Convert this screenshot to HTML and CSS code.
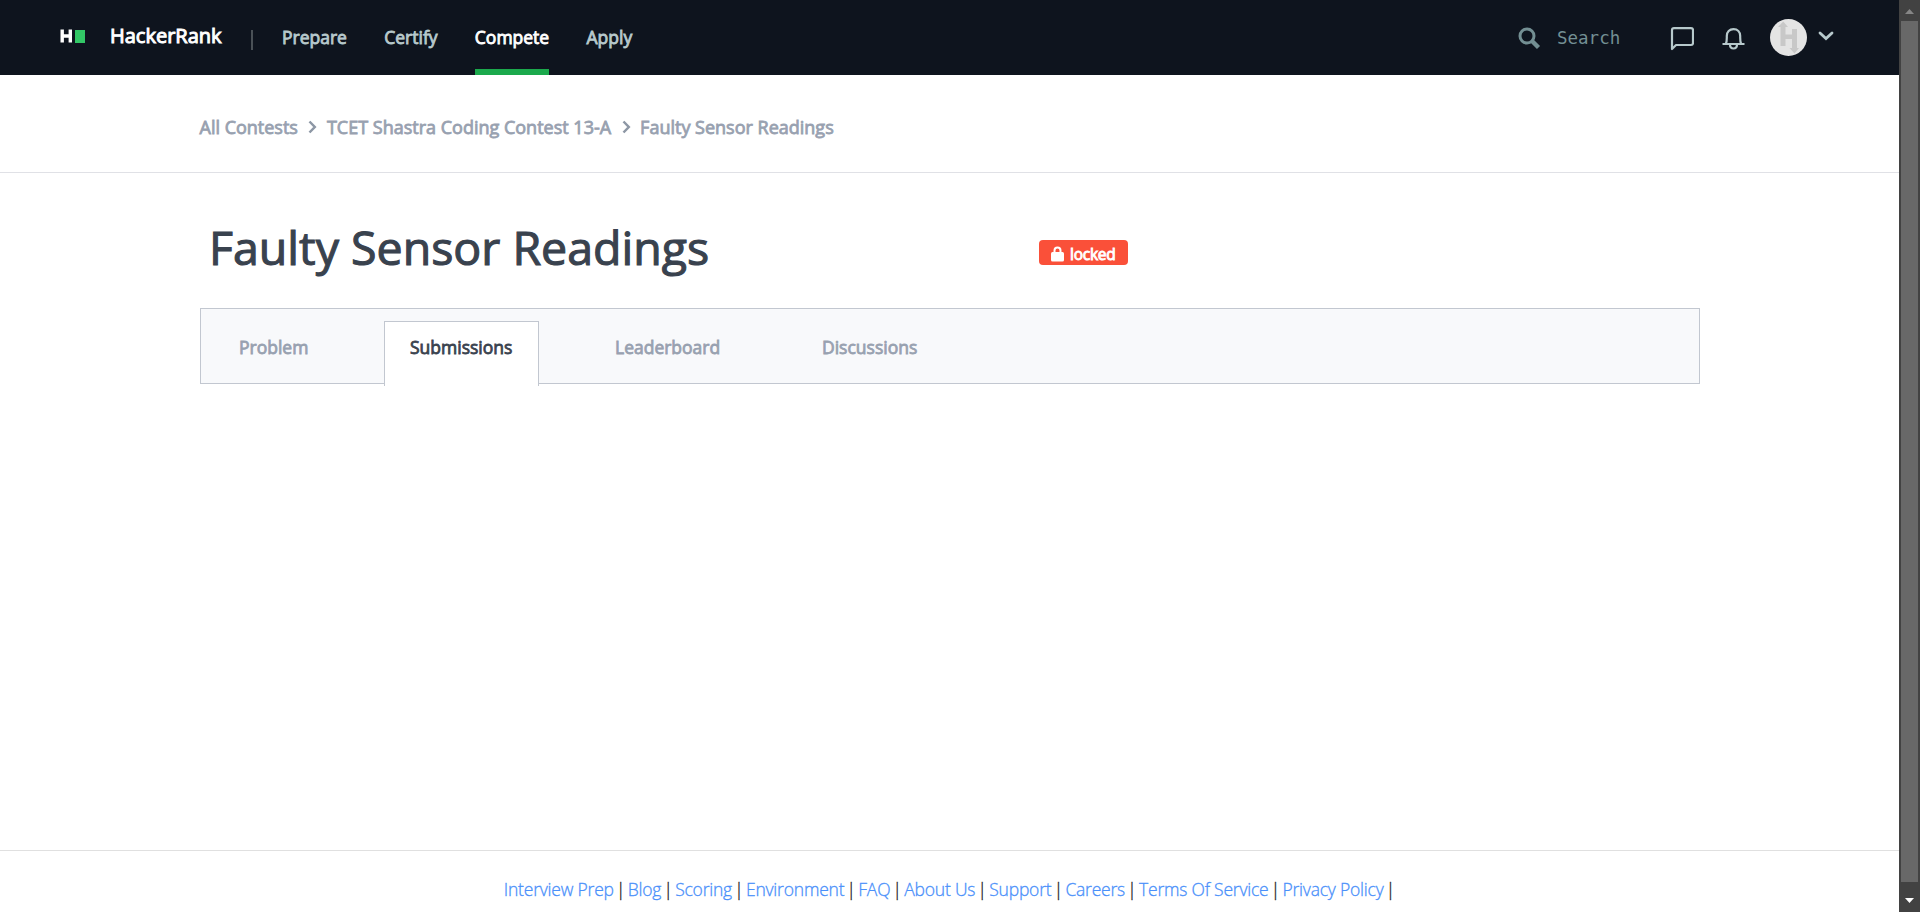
FILE: index.html
```html
<!DOCTYPE html>
<html lang="en">
<head>
<meta charset="utf-8">
<title>Faulty Sensor Readings | HackerRank</title>
<link rel="stylesheet" href="styles.css">
</head>
<body>
<div class="page">
  <header class="navbar">
    <svg class="logo" width="27" height="16" viewBox="0 0 27 16"><path d="M2.2 1.500v13M10.300 1.500v13M2 8h8" stroke="#fff" stroke-width="3.400" fill="none"/><path d="M15 2h10v13h-10z" fill="#32c766"/></svg>
    <span class="brand">HackerRank</span>
    <span class="divider"></span>
    <nav class="links">
      <a>Prepare</a><a>Certify</a><a class="active">Compete</a><a>Apply</a>
    </nav>
    <div class="tools">
      <svg class="search-icon" width="23" height="23" viewBox="0 0 23 23" fill="none" stroke="#738f93"><circle cx="9" cy="9" r="7" stroke-width="3"/><path d="M14 14l6.500 6.500" stroke-width="4.400"/></svg>
      <span class="search">Search</span>
      <svg class="chat" width="24" height="24" viewBox="0 0 24 24" fill="none" stroke="#b7c9cc" stroke-width="2.200" stroke-linejoin="round"><path d="M2 22V3Q2 1.200 4 1.200H21Q23 1.200 23 3V16Q23 18 21 18H6Z"/></svg>
      <svg class="bell" width="23" height="22" viewBox="0 0 23 22" fill="none" stroke="#b7c9cc" stroke-width="2.200"><path d="M.5 16H22.5M3.8 16C5 14 4.800 12 4.800 8C4.800 3.800 7.500 1.200 11.500 1.200S18.200 3.800 18.200 8C18.200 12 18 14 19.200 16M8 16.500C8 19 9.500 20.500 11.500 20.500S15 19 15 16.500"/></svg>
      <svg class="avatar" width="37" height="37" viewBox="0 0 37 37"><circle cx="18.500" cy="18.500" r="18.500" fill="#e4e4e4"/><path d="M10.500 27V8H8L13.200 2.500L18 8H15.500V15.500H22V10H27V29H29L24.500 34.500L19.500 29H22V20H15.500V27Z" fill="#c8c8c8"/></svg>
      <svg class="caret" width="16" height="10" viewBox="0 0 16 10" fill="none" stroke="#b7c9cc" stroke-width="2.800" stroke-linecap="round"><path d="M2 2l6 5.500L14 2"/></svg>
    </div>
  </header>
  <div class="crumbs">
    <a>All Contests</a>
    <svg width="9" height="14" viewBox="0 0 9 14"><path d="M1.500 1.500L6.800 7L1.500 12.500" fill="none" stroke="#8d97a5" stroke-width="2.500"/></svg>
    <a>TCET Shastra Coding Contest 13-A</a>
    <svg width="9" height="14" viewBox="0 0 9 14"><path d="M1.500 1.500L6.800 7L1.500 12.500" fill="none" stroke="#8d97a5" stroke-width="2.500"/></svg>
    <a>Faulty Sensor Readings</a>
  </div>
  <main>
    <div class="heading">
      <h1>Faulty Sensor Readings</h1>
      <span class="badge"><svg width="13" height="16" viewBox="0 0 13 16"><path d="M3.500 7V4.500a3 3 0 0 1 6 0V7" fill="none" stroke="#fff" stroke-width="2"/><rect y="6" width="13" height="9.500" rx="1.500" fill="#fff"/></svg><span>locked</span></span>
    </div>
    <div class="tabs">
      <a class="problem">Problem</a><a class="current">Submissions</a><a class="leader">Leaderboard</a><a class="discuss">Discussions</a>
    </div>
  </main>
  <footer>
    <p><a>Interview Prep</a> | <a>Blog</a> | <a>Scoring</a> | <a>Environment</a> | <a>FAQ</a> | <a>About Us</a> | <a>Support</a> | <a>Careers</a> | <a>Terms Of Service</a> | <a>Privacy Policy</a> |</p>
  </footer>
</div>
<div class="scrollbar">
  <svg width="21" height="21" viewBox="0 0 21 21"><path d="M6 14L10.500 9L15 14Z" fill="#868686"/></svg>
  <div class="thumb"></div>
  <svg width="21" height="30" viewBox="0 0 21 30"><path d="M6 16L10.500 21L15 16Z" fill="#fff"/></svg>
</div>
</body>
</html>
```
FILE: styles.css
```css
body { margin: 0; display: flex; height: 912px; overflow: hidden; background: #fff; font-family: "Open Sans", sans-serif; font-size: 17.5px; white-space: nowrap; }
.page { width: 1899px; display: flex; flex-direction: column; }
svg { display: block; flex: none; }
.navbar { height: 75px; background: #0e141e; display: flex; line-height: 75px; flex: none; }
.logo { margin: 28px 0 0 60px; }
.brand { width: 112px; margin-left: 23px; font-size: 20px; line-height: 71px; color: #fff; -webkit-text-stroke: 1px #fff; }
.divider { width: 2px; height: 20px; margin: 30px 30px 0 29px; background: #4a5157; }
.links { display: flex; gap: 37.3px; color: #b7c9cc; margin-left: -1px; -webkit-text-stroke: .85px; }
.links a { height: 75px; box-sizing: border-box; }
.links .active { color: #fff; border-bottom: 6px solid #1ba94c; }
.tools { display: flex; margin-left: auto; width: 381px; }
.search-icon { margin-top: 27px; }
.search { font-family: "DejaVu Sans Mono", monospace; color: #738f93; width: 64px; margin-left: 16px; line-height: 77px; }
.chat { margin: 27px 0 0 49px; }
.bell { margin: 28px 0 0 28px; }
.avatar { margin: 19px 0 0 25px; }
.caret { margin: 31px 0 0 11px; }
.crumbs { flex: none; height: 97px; box-sizing: content-box; border-bottom: 1px solid #e0e1e6; display: flex; align-items: center; padding-left: 199.5px; font-size: 18px; color: #98a1b0; -webkit-text-stroke: .8px; }
.crumbs a { line-height: 24px; padding-top: 7px; }
.crumbs svg { margin: 7px 9.5px 0 10.5px; }
main { flex: 1; padding: 44px 199px 0 200px; }
.heading { display: flex; height: 91px; }
h1 { margin: 0 0 0 9px; width: 830px; font-size: 46.5px; line-height: 61px; font-weight: 400; color: #39424e; -webkit-text-stroke: 1.1px; }
.badge { display: flex; box-sizing: border-box; width: 89px; height: 25px; margin-top: 23px; padding: 6px 0 0 12px; background: #fa5039; border-radius: 4px; color: #fff; font-size: 15.5px; letter-spacing: -.25px; line-height: 16px; -webkit-text-stroke: .9px; }
.badge span { margin: 0 0 0 6px; }
.tabs { display: flex; height: 74px; border: 1px solid #c2c7d0; background: #f8f9fb; color: #98a1b0; -webkit-text-stroke: .8px; padding-left: 38px; }
.tabs a { height: 50px; line-height: 50px; margin-top: 13px; }
.problem { width: 145px; }
.tabs .current { width: 128px; height: 64px; padding-left: 25px; margin-top: 12px; border: 1px solid #c2c7d0; border-bottom: 0; background: #fff; color: #39424e; }
.leader { margin-left: 76px; width: 207px; }
footer { flex: none; height: 61px; border-top: 1px solid #e0e0e0; color: #222; text-align: center; }
footer p { margin: 26px 0 0; line-height: 24px; font-weight: 300; word-spacing: -2.3px; -webkit-text-stroke: .3px; }
footer a { color: #4a90fa; letter-spacing: -.21px; word-spacing: 0; }
.scrollbar { width: 21px; background: #424242; }
.thumb { width: 17px; height: 861px; margin-left: 2px; background: #686868; }
```
